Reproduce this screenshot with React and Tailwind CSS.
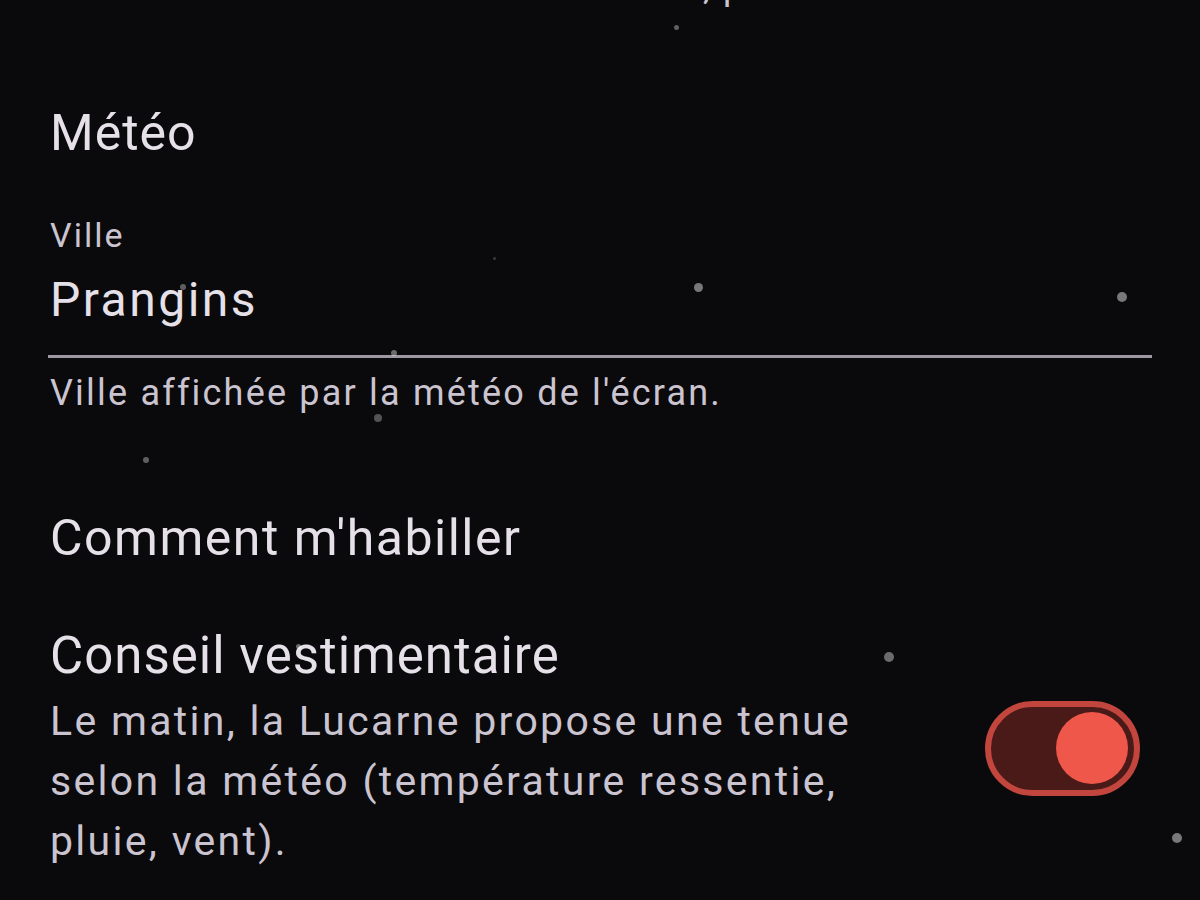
import React, { useState } from 'react';

const stars = [
  { x: 676, y: 27, s: 5, o: 0.35 },
  { x: 494, y: 258, s: 3, o: 0.2 },
  { x: 698, y: 287, s: 9, o: 0.45 },
  { x: 1122, y: 297, s: 10, o: 0.45 },
  { x: 183, y: 287, s: 6, o: 0.35 },
  { x: 394, y: 353, s: 6, o: 0.4 },
  { x: 378, y: 418, s: 8, o: 0.3 },
  { x: 146, y: 460, s: 6, o: 0.35 },
  { x: 298, y: 646, s: 5, o: 0.4 },
  { x: 889, y: 657, s: 10, o: 0.4 },
  { x: 1177, y: 838, s: 10, o: 0.45 },
];

function Toggle({ checked, onChange }) {
  return (
    <button
      type="button"
      onClick={() => onChange(!checked)}
      className={
        checked
          ? 'flex items-center justify-end w-[155px] h-[95px] rounded-full border-[6px] border-[#c2463d] bg-[#4a1a19] px-[6px] shrink-0'
          : 'flex items-center justify-start w-[155px] h-[95px] rounded-full border-[6px] border-[#8f8a94] bg-[#2a272d] px-[14px] shrink-0'
      }
    >
      <span
        className={
          checked
            ? 'block w-[72px] h-[72px] rounded-full bg-[#ef574a]'
            : 'block w-[48px] h-[48px] rounded-full bg-[#8f8a94]'
        }
      />
    </button>
  );
}

export default function App() {
  const [city, setCity] = useState('Prangins');
  const [advice, setAdvice] = useState(true);

  return (
    <div
      className="relative w-[1200px] h-[900px] overflow-hidden bg-[#0a090b] text-[#e6e0e9]"
      style={{ fontFamily: 'Roboto, "Noto Sans", sans-serif' }}
    >
      {stars.map((st, i) => (
        <span
          key={i}
          className="absolute rounded-full bg-white pointer-events-none"
          style={{ left: st.x - st.s / 2, top: st.y - st.s / 2, width: st.s, height: st.s, opacity: st.o }}
        />
      ))}

      <div className="px-[48px]">
        {/* previous section's helper text, scrolled mostly out of view */}
        <p className="mt-[-35.5px] pl-[2px] text-[36px] leading-[44px] tracking-[2px] text-[#cac4d0] whitespace-nowrap">
          Durée affichée entre les deux écrans, puis retour.
        </p>

        <h2 className="mt-[94.5px] pl-[2px] text-[50px] leading-[60px] tracking-[1px]">Météo</h2>

        <div className="mt-[52px]">
          <label htmlFor="city" className="block pl-[2px] text-[34px] leading-[40px] tracking-[2px] text-[#cac4d0]">
            Ville
          </label>
          <input
            id="city"
            value={city}
            onChange={(e) => setCity(e.target.value)}
            className="block w-full bg-transparent outline-none pl-[2px] pt-[15px] pb-[25px] text-[48px] leading-[60px] tracking-[2.5px] text-[#e6e0e9] border-b-[3px] border-[#9d98a1]"
          />
          <p className="mt-[13px] pl-[2px] text-[36px] leading-[44px] tracking-[2.2px] text-[#cac4d0]">
            Ville affichée par la météo de l'écran.
          </p>
        </div>

        <h2 className="mt-[93px] pl-[2px] text-[50px] leading-[60px] tracking-[1.5px]">Comment m'habiller</h2>

        <div className="mt-[57px] flex items-center justify-between pl-[2px] pr-[12px]">
          <div className="max-w-[860px]">
            <p className="text-[51px] leading-[62px] tracking-[1px]">Conseil vestimentaire</p>
            <p className="mt-[4px] text-[41px] leading-[60px] tracking-[2.3px] text-[#cac4d0]">
              Le matin, la Lucarne propose une tenue selon la météo (température ressentie, pluie, vent).
            </p>
          </div>
          <Toggle checked={advice} onChange={setAdvice} />
        </div>
      </div>
    </div>
  );
}
